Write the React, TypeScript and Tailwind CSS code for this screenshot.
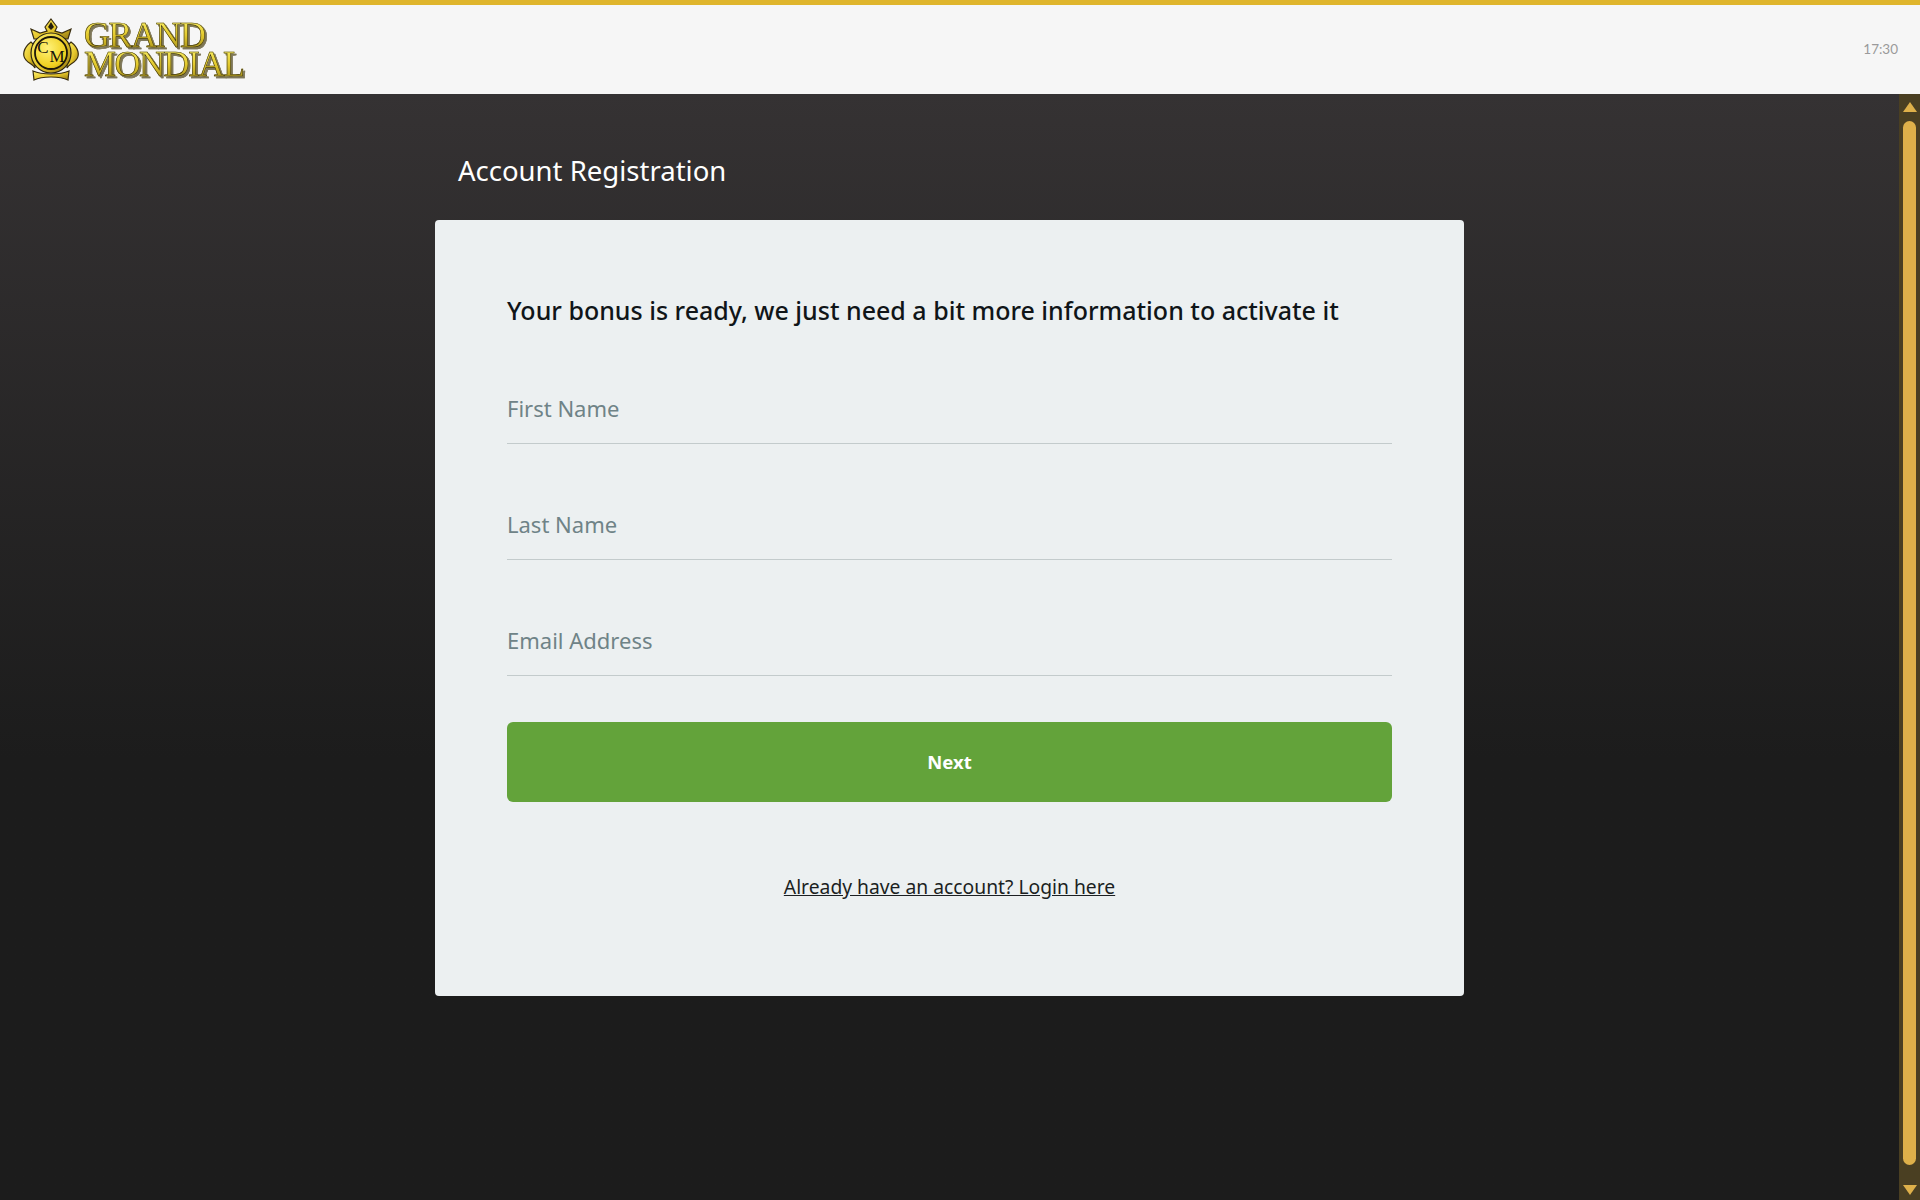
// Halaman: Account Registration
import { useState } from 'react';

function LogoCrest() {
  return (
    <svg width="58" height="64" viewBox="0 0 58 64" className="shrink-0">
      <defs>
        <linearGradient id="gold" x1="0" y1="0" x2="1" y2="1">
          <stop offset="0" stopColor="#fdf06a" />
          <stop offset="0.55" stopColor="#e5c52a" />
          <stop offset="1" stopColor="#8f7410" />
        </linearGradient>
        <radialGradient id="coin" cx="0.4" cy="0.35" r="0.8">
          <stop offset="0" stopColor="#fff27a" />
          <stop offset="0.7" stopColor="#f0d020" />
          <stop offset="1" stopColor="#b9960f" />
        </radialGradient>
      </defs>
      {/* crown */}
      <path d="M29 1 L35 9 L33 13 L40 15 L49 11 L46 21 L12 21 L9 11 L18 15 L25 13 L23 9 Z" fill="url(#gold)" stroke="#3a2e10" strokeWidth="1.2" />
      <path d="M29 4 L32 9 L29 12 L26 9 Z" fill="#231d0c" />
      {/* side scrolls */}
      <path d="M9 24 C1 30 0 38 4 42 C7 46 11 46 13 50 L13 28 Z" fill="url(#gold)" stroke="#3a2e10" strokeWidth="1.2" />
      <path d="M49 24 C57 30 58 38 54 42 C51 46 47 46 45 50 L45 28 Z" fill="url(#gold)" stroke="#3a2e10" strokeWidth="1.2" />
      {/* bottom ribbon */}
      <path d="M11 53 C20 57 38 57 47 53 L46 62 C38 58 20 58 12 62 Z" fill="url(#gold)" stroke="#3a2e10" strokeWidth="1.2" />
      {/* medallion */}
      <circle cx="29" cy="35" r="20" fill="url(#gold)" stroke="#2a2412" strokeWidth="1.2" />
      <circle cx="29" cy="35" r="16" fill="url(#coin)" stroke="#1c170a" strokeWidth="1.8" />
      <text x="21" y="35" fontFamily="'Liberation Serif', serif" fontSize="17" fill="#17130a" textAnchor="middle">C</text>
      <text x="35" y="44" fontFamily="'Liberation Serif', serif" fontSize="17" fill="#17130a" textAnchor="middle">M</text>
    </svg>
  );
}

function Field({ placeholder }: { placeholder: string }) {
  const [value, setValue] = useState('');
  return (
    <input
      value={value}
      onChange={(e) => setValue(e.target.value)}
      placeholder={placeholder}
      className="block h-[68px] w-full border-b border-[#c3cbcc] bg-transparent pb-[3px] text-[22px] text-[#333] outline-none placeholder:text-[#6f8387]"
    />
  );
}

export default function App() {
  return (
    <div className="flex h-[1200px] flex-col overflow-hidden font-['Noto_Sans',sans-serif]">
      {/* Header */}
      <header className="flex h-[94px] shrink-0 items-center justify-between border-t-[5px] border-[#dfb52c] bg-[#f6f6f6] px-[22px]">
        <div className="flex items-center gap-[4px]">
          <LogoCrest />
          <div className="w-[170px] bg-[linear-gradient(180deg,#f8ec60_0%,#e3c92c_50%,#a8921c_100%)] bg-[length:100%_29px] bg-clip-text font-['Liberation_Serif',serif] text-[36px] leading-[29px] tracking-[-1.5px] text-transparent [-webkit-text-stroke:0.6px_#3d3512] [filter:drop-shadow(2px_2px_0_#7d7658)]">
            GRAND MONDIAL
          </div>
        </div>
        <span className="font-['Lato',sans-serif] text-[13.5px] text-[#9a9a9a]">17:30</span>
      </header>

      <div className="flex min-h-0 flex-1">
        {/* Content */}
        <main className="flex-1 bg-gradient-to-b from-[#353233] to-[#1c1c1c] to-[60%]">
          <div className="mx-auto w-[1029px]">
            <h1 className="pl-[23px] pt-[56px] text-[27.5px] leading-[41px] text-white">Account Registration</h1>
            <div className="mt-[29px] h-[776px] rounded-[4px] bg-[#ecf0f1] px-[72px] pt-[72px]">
              <h2 className="text-[25px] font-medium leading-[36px] text-[#101518]">
                Your bonus is ready, we just need a bit more information to activate it
              </h2>
              <div className="mt-[48px] flex flex-col gap-[48px]">
                <Field placeholder="First Name" />
                <Field placeholder="Last Name" />
                <Field placeholder="Email Address" />
              </div>
              <button className="mt-[46px] h-[80px] w-full rounded-[6px] bg-[#63a33a] text-[18.5px] font-bold text-white">
                Next
              </button>
              <div className="mt-[71px] text-center">
                <a href="#" className="text-[19.3px] leading-[28px] text-[#1b1f22] underline">
                  Already have an account? Login here
                </a>
              </div>
            </div>
          </div>
        </main>

        {/* Scrollbar */}
        <div className="flex w-[21px] shrink-0 flex-col items-center bg-[#4a3f22] pb-[5px] pt-[8px]">
          <div className="h-0 w-0 border-x-[7px] border-b-[10px] border-x-transparent border-b-[#deb04a]" />
          <div className="mt-[9px] w-[13px] flex-1 rounded-full bg-[#deb04a]" />
          <div className="mt-[20px] h-0 w-0 border-x-[7px] border-t-[10px] border-x-transparent border-t-[#deb04a]" />
        </div>
      </div>
    </div>
  );
}
